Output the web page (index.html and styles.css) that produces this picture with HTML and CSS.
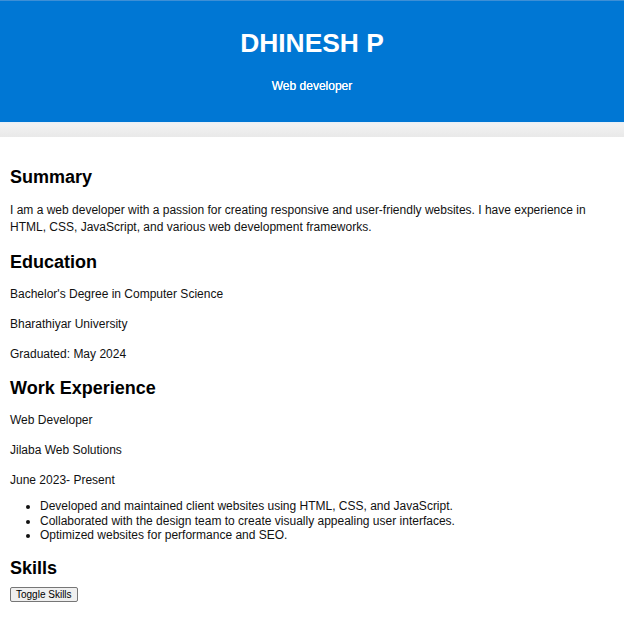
FILE: index.html
```html
<!DOCTYPE html>
<html lang="en">
<head>
<meta charset="utf-8">
<title>Dhinesh P - Resume</title>
<link rel="stylesheet" href="styles.css">
</head>
<body>
<header class="hero">
  <h1 class="hero-name">DHINESH P</h1>
  <p class="hero-role">Web developer</p>
</header>
<div class="band"></div>
<main class="content">
  <section class="block">
    <h2 class="block-title block-title--first">Summary</h2>
    <p class="text text--summary">I am a web developer with a passion for creating responsive and user-friendly websites. I have experience in HTML, CSS, JavaScript, and various web development frameworks.</p>
  </section>
  <section class="block">
    <h2 class="block-title">Education</h2>
    <p class="text">Bachelor's Degree in Computer Science</p>
    <p class="text">Bharathiyar University</p>
    <p class="text">Graduated: May 2024</p>
  </section>
  <section class="block">
    <h2 class="block-title">Work Experience</h2>
    <p class="text">Web Developer</p>
    <p class="text">Jilaba Web Solutions</p>
    <p class="text text--before-list">June 2023- Present</p>
    <ul class="list">
      <li>Developed and maintained client websites using HTML, CSS, and JavaScript.</li>
      <li>Collaborated with the design team to create visually appealing user interfaces.</li>
      <li>Optimized websites for performance and SEO.</li>
    </ul>
  </section>
  <section class="block">
    <h2 class="block-title block-title--skills">Skills</h2>
    <button class="toggle" type="button">Toggle Skills</button>
  </section>
</main>
</body>
</html>
```

FILE: styles.css
```css
html, body {
  margin: 0;
  padding: 0;
  background: #ffffff;
}
body {
  font-family: "Liberation Sans", Arial, sans-serif;
  font-size: 12px;
  color: #111111;
}
.hero {
  background: #0077d4;
  border-top: 1px solid #3d8fd6;
  padding: 27px 10px 29px;
  text-align: center;
  color: #ffffff;
  height: 65px;
}
.hero-name {
  margin: 0;
  font-size: 26.4px;
  line-height: 30px;
  font-weight: bold;
}
.hero-role {
  margin: 21px 0 0;
  font-size: 12px;
  line-height: 14px;
  text-shadow: 0 0 0.4px #ffffff;
}
.band {
  height: 15px;
  background: linear-gradient(#e4eef8 0px, #f2f2f2 2px, #e9e9e9 15px);
}
.content {
  padding: 15.5px 10px 10px;
}
.content > .block:first-child {
  padding-top: 0.1px;
}
.block-title {
  margin: 15px 0 13px;
  font-size: 18px;
  line-height: 21px;
  font-weight: bold;
  color: #000000;
}
.block-title--first {
  margin-top: 14.5px;
  margin-bottom: 14px;
}
.block-title--skills {
  margin-top: 15.5px;
  margin-bottom: 8px;
}
.text {
  margin: 13px 0;
  line-height: 17px;
}
.text--summary {
  margin-bottom: 16px;
}
.text--before-list {
  margin-bottom: 10px;
}
.list {
  margin: 0 0 12px;
  padding-left: 30px;
  line-height: 14.5px;
}
.toggle {
  display: block;
  font-family: "Liberation Sans", Arial, sans-serif;
  font-size: 10px;
  line-height: 11px;
  padding: 1px 5px;
  margin: 0;
  background: #efefef;
  border: 1px solid #767676;
  border-radius: 2px;
  color: #000;
}
```
